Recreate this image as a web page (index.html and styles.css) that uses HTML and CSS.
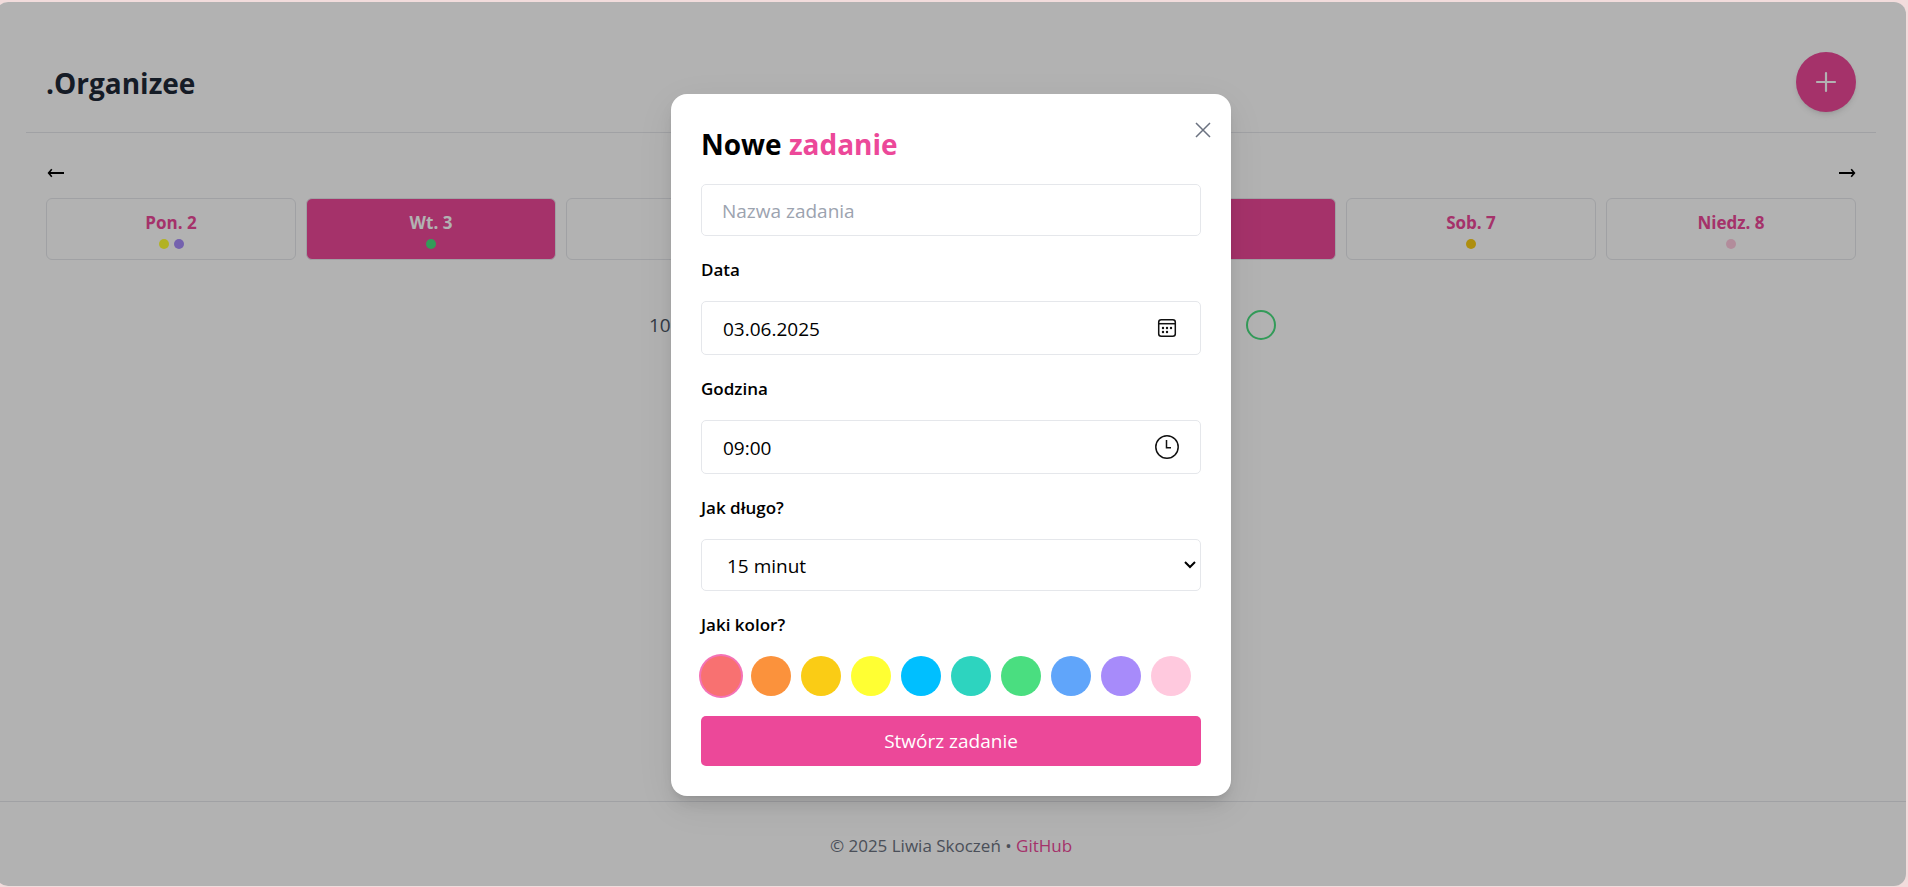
FILE: index.html
```html
<!DOCTYPE html>
<html lang="pl">
<head>
<meta charset="utf-8">
<title>.Organizee</title>
<link rel="stylesheet" href="styles.css">
</head>
<body>
<div class="app">
  <header class="header">
    <h1 class="logo">.Organizee</h1>
    <button class="add" type="button" aria-label="Dodaj zadanie">
      <svg width="30" height="30" viewBox="0 0 30 30" fill="none" stroke="currentColor" stroke-width="2.200" stroke-linecap="round"><path d="M15 6v18M6 15h18"/></svg>
    </button>
  </header>
  <main class="main">
    <nav class="arrows">
      <button class="arrow" type="button" aria-label="Poprzedni tydzień">
        <svg width="20" height="12" viewBox="0 0 20 12" fill="none" stroke="currentColor" stroke-width="2"><path d="M3 6h15"/><path d="M5.800 2.300L2.600 6L5.800 9.700" stroke-width="1.600"/></svg>
      </button>
      <button class="arrow" type="button" aria-label="Następny tydzień">
        <svg width="20" height="12" viewBox="0 0 20 12" fill="none" stroke="currentColor" stroke-width="2"><path d="M3 6h15"/><path d="M15.200 2.300L18.400 6L15.200 9.700" stroke-width="1.600"/></svg>
      </button>
    </nav>
    <div class="week">
      <button class="day" type="button">Pon. 2<span class="dots"><i class="dot yellow"></i><i class="dot violet"></i></span></button>
      <button class="day active" type="button">Wt. 3<span class="dots"><i class="dot green"></i></span></button>
      <button class="day" type="button">Śr. 4<span class="dots"></span></button>
      <button class="day" type="button">Czw. 5<span class="dots"></span></button>
      <button class="day active" type="button">Pt. 6<span class="dots"></span></button>
      <button class="day" type="button">Sob. 7<span class="dots"><i class="dot gold"></i></span></button>
      <button class="day" type="button">Niedz. 8<span class="dots"><i class="dot pink"></i></span></button>
    </div>
    <div class="task">
      <span>10:00</span>
      <button class="check" type="button" aria-label="Wykonane"></button>
    </div>
  </main>
  <footer class="footer">© 2025 Liwia Skoczeń • <a class="link" href="#">GitHub</a></footer>

  <div class="overlay">
    <form class="modal" role="dialog" aria-labelledby="modal-title">
      <button class="close" type="button" aria-label="Zamknij">
        <svg width="16" height="16" viewBox="0 0 16 16" fill="none" stroke="currentColor" stroke-width="1.500"><path d="M1 1l14 14M15 1L1 15"/></svg>
      </button>
      <h2 class="title" id="modal-title">Nowe <span class="accent">zadanie</span></h2>
      <input class="field name" type="text" placeholder="Nazwa zadania" aria-label="Nazwa zadania">
      <label class="label" for="date">Data</label>
      <div class="picker">
        <input class="field" id="date" type="text" value="03.06.2025">
        <svg class="icon" width="24" height="24" viewBox="0 0 24 24" fill="none" stroke="#111" stroke-width="1.500"><rect x="3.700" y="3.700" width="16.600" height="16.600" rx="2.500"/><path d="M3.700 7.700H20.300"/><g fill="#111" stroke="none"><circle cx="8" cy="12" r="1.200"/><circle cx="12" cy="12" r="1.200"/><circle cx="16" cy="12" r="1.200"/><circle cx="8" cy="16" r="1.200"/><circle cx="12" cy="16" r="1.200"/></g></svg>
      </div>
      <label class="label" for="time">Godzina</label>
      <div class="picker">
        <input class="field" id="time" type="text" value="09:00">
        <svg class="icon" width="24" height="24" viewBox="0 0 24 24" fill="none" stroke="#111" stroke-width="1.500"><circle cx="12" cy="12" r="11.200"/><path d="M11.500 5V12.700H16"/></svg>
      </div>
      <label class="label" for="length">Jak długo?</label>
      <div class="picker">
        <select class="field select" id="length"><option>15 minut</option></select>
        <svg class="chevron" width="12" height="10" viewBox="0 0 12 10" fill="none" stroke="#000" stroke-width="2"><path d="M1 2L6 7L11 2"/></svg>
      </div>
      <span class="label" id="color-label">Jaki kolor?</span>
      <div class="colors" role="radiogroup" aria-labelledby="color-label">
        <input class="color red" type="radio" name="color" aria-label="Czerwony" checked>
        <input class="color orange" type="radio" name="color" aria-label="Pomarańczowy">
        <input class="color gold" type="radio" name="color" aria-label="Złoty">
        <input class="color yellow" type="radio" name="color" aria-label="Żółty">
        <input class="color sky" type="radio" name="color" aria-label="Błękitny">
        <input class="color teal" type="radio" name="color" aria-label="Morski">
        <input class="color green" type="radio" name="color" aria-label="Zielony">
        <input class="color blue" type="radio" name="color" aria-label="Niebieski">
        <input class="color violet" type="radio" name="color" aria-label="Fioletowy">
        <input class="color pink" type="radio" name="color" aria-label="Różowy">
      </div>
      <button class="submit" type="submit">Stwórz zadanie</button>
    </form>
  </div>
</div>
</body>
</html>
```

FILE: styles.css
```css
* { box-sizing: border-box; }
html { background: #f2dcdc; overflow: hidden; }
body {
  margin: 2px 2px 1px -4px;
  font-family: "Segoe UI", "Open Sans", "Noto Sans", sans-serif;
  font-size: 17px;
  color: #000;
}
button, input, select { font: inherit; color: inherit; margin: 0; }
button { border: 0; padding: 0; background: none; cursor: pointer; }
svg { display: block; }

.app {
  position: relative;
  display: flex;
  flex-direction: column;
  min-height: calc(100vh - 3px);
  border-radius: 12px;
  overflow: hidden;
  background: #fff;
}
.header {
  display: flex;
  justify-content: space-between;
  align-items: center;
  margin: 30px 30px 0;
  padding: 20px;
  border-bottom: 1px solid #e5e7eb;
}
.logo { margin: 0; padding-top: 2px; font-size: 28px; line-height: 40px; font-weight: 700; color: #1f2937; }
.add {
  display: grid;
  place-items: center;
  width: 60px;
  height: 60px;
  border-radius: 50%;
  background: #ec4899;
  color: #fff;
  box-shadow: 0 4px 6px -1px rgba(0, 0, 0, .1), 0 2px 4px -2px rgba(0, 0, 0, .1);
}
.main { flex: 1; padding: 30px 50px 0; }
.arrows { display: flex; justify-content: space-between; }
.arrow { height: 20px; }
.week {
  display: grid;
  grid-template-columns: repeat(7, minmax(0, 1fr));
  gap: 10px;
  margin-top: 15px;
}
.day {
  display: flex;
  flex-direction: column;
  align-items: center;
  gap: 3px;
  padding: 11px 0 10px;
  border: 1px solid #e5e7eb;
  border-radius: 6px;
  font-weight: 700;
  line-height: 26px;
  color: #ec4899;
}
.day.active { background: #ec4899; color: #fff; }
.dots { display: flex; gap: 5px; height: 10px; }
.dot { width: 10px; height: 10px; border-radius: 50%; }
.task {
  display: flex;
  justify-content: space-between;
  align-items: center;
  max-width: 650px;
  margin: 50px auto 0;
  padding-left: 23px;
  font-size: 19px;
  color: #4b5563;
}
.check { width: 30px; height: 30px; border: 2px solid #4ade80; border-radius: 50%; }
.footer {
  padding: 32px 0 28px;
  border-top: 1px solid #e5e7eb;
  text-align: center;
  line-height: 24px;
  color: #6b7280;
}
.link { color: #ec4899; text-decoration: none; }

.overlay {
  position: absolute;
  inset: 0;
  display: flex;
  align-items: center;
  justify-content: center;
  padding-top: 2px;
  background: rgba(0, 0, 0, .3);
}
.modal {
  position: relative;
  display: flex;
  flex-direction: column;
  gap: 20px;
  width: 560px;
  max-width: 100%;
  padding: 30px;
  border-radius: 16px;
  background: #fff;
  box-shadow: 0 10px 15px -3px rgba(0, 0, 0, .1), 0 4px 6px -4px rgba(0, 0, 0, .1), 0 10px 40px rgba(0, 0, 0, .06);
}
.close { position: absolute; top: 28px; right: 20px; color: #6b7280; }
.title { margin: 0; font-size: 28px; line-height: 40px; font-weight: 700; }
.accent { color: #ec4899; }
.label { padding-top: 2px; font-size: 17px; line-height: 23px; font-weight: 600; }
.field {
  display: block;
  width: 100%;
  height: 54px;
  padding: 1px 21px 0;
  border: 1px solid #e5e7eb;
  border-radius: 5px;
  outline: 0;
  background: #fff;
  font-size: 19px;
}
.name { height: 52px; padding: 1px 20px 0; }
.name::placeholder { color: #9ca3af; opacity: 1; }
.select { appearance: none; height: 52px; padding: 2px 25px 0; }
.picker { position: relative; }
.icon, .chevron { position: absolute; top: 50%; transform: translateY(-50%); pointer-events: none; }
.icon { right: 22px; }
.chevron { right: 5px; }
.colors { display: flex; flex-wrap: wrap; gap: 10px; }
.color { appearance: none; width: 40px; height: 40px; border-radius: 50%; }
.color:checked { box-shadow: 0 0 0 2px #f472b6; }
.submit {
  height: 50px;
  border-radius: 5px;
  background: #ec4899;
  color: #fff;
  font-size: 19px;
}
.red { background: #f87171; }
.orange { background: #fb923c; }
.gold { background: #facc15; }
.yellow { background: #ffff33; }
.sky { background: #00bfff; }
.teal { background: #2dd4bf; }
.green { background: #4ade80; }
.blue { background: #60a5fa; }
.violet { background: #a78bfa; }
.pink { background: #ffc9de; }
```
